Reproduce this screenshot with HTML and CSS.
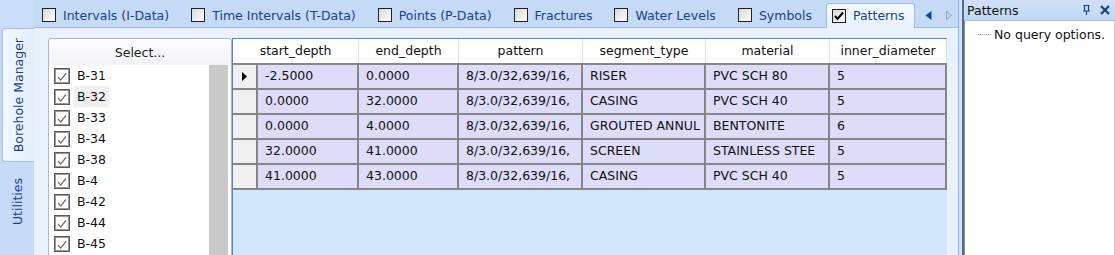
FILE: index.html
```html
<!DOCTYPE html>
<html lang="en">
<head>
  <meta charset="UTF-8" />
  <title>Borehole Manager - Patterns</title>
  <link rel="stylesheet" href="styles.css">
</head>
<body>
  <div class="app">
    <div class="main">
      <!-- Left side tabs -->
      <div class="vtabs">
        <div class="vtabs-corner"></div>
        <div class="vtab active"><span>Borehole Manager</span></div>
        <div class="vtab util"><span>Utilities</span></div>
      </div>

      <div class="workspace">
        <!-- Data type tabs -->
        <div class="tabstrip">
          <div class="tab"><span class="tcb"></span>Intervals (I-Data)</div>
          <div class="tab"><span class="tcb"></span>Time Intervals (T-Data)</div>
          <div class="tab"><span class="tcb"></span>Points (P-Data)</div>
          <div class="tab"><span class="tcb"></span>Fractures</div>
          <div class="tab"><span class="tcb"></span>Water Levels</div>
          <div class="tab"><span class="tcb"></span>Symbols</div>
          <div class="tab active">
            <span class="tcb"><svg width="12" height="12" viewBox="0 0 12 12"><polyline points="2,6 4.5,9 10,2.5" fill="none" stroke="#000" stroke-width="2"/></svg></span>Patterns
          </div>
          <div class="tab-nav">
            <svg width="7" height="9" viewBox="0 0 7 9"><polygon points="6.5,0 6.5,9 0.5,4.5" fill="#15428b"/></svg>
            <svg width="6" height="9" viewBox="0 0 6 9"><polygon points="0.5,0.5 0.5,8.5 5.5,4.5" fill="none" stroke="#8d9db5"/></svg>
          </div>
        </div>

        <div class="content">
          <!-- Borehole selection -->
          <div class="select-panel">
            <div class="select-head">Select...</div>
            <div class="select-body">
              <ul class="select-list" id="borehole-list"></ul>
              <div class="scroll"></div>
            </div>
          </div>

          <!-- Patterns grid -->
          <div class="grid">
            <div class="grid-head">
              <div class="hcell first">start_depth</div>
              <div class="hcell">end_depth</div>
              <div class="hcell">pattern</div>
              <div class="hcell">segment_type</div>
              <div class="hcell">material</div>
              <div class="hcell">inner_diameter</div>
            </div>
            <div class="grid-body" id="grid-body"></div>
          </div>
        </div>
      </div>
    </div>

    <div class="splitter"></div>

    <!-- Query options panel -->
    <div class="side">
      <div class="side-head">
        <span>Patterns</span>
        <span class="side-icons">
          <svg width="7" height="10" viewBox="0 0 7 10"><path d="M0.5 0.5h6M1.5 1v5h4V1M0 6h7M3.5 6v4" fill="none" stroke="#15428b" stroke-width="1.2"/></svg>
          <svg width="10" height="10" viewBox="0 0 10 10"><path d="M1 1L9 9M9 1L1 9" stroke="#15428b" stroke-width="2.2"/></svg>
        </span>
      </div>
      <div class="side-body">
        <div class="side-item"><span class="dots"></span>No query options.</div>
      </div>
    </div>
  </div>

  <script>
    const boreholes = ["B-31", "B-32", "B-33", "B-34", "B-38", "B-4", "B-42", "B-44", "B-45"];

    const rows = [
      ["-2.5000", "0.0000", "8/3.0/32,639/16,", "RISER", "PVC SCH 80", "5"],
      ["0.0000", "32.0000", "8/3.0/32,639/16,", "CASING", "PVC SCH 40", "5"],
      ["0.0000", "4.0000", "8/3.0/32,639/16,", "GROUTED ANNUL", "BENTONITE", "6"],
      ["32.0000", "41.0000", "8/3.0/32,639/16,", "SCREEN", "STAINLESS STEE", "5"],
      ["41.0000", "43.0000", "8/3.0/32,639/16,", "CASING", "PVC SCH 40", "5"]
    ];

    const checkSvg = `<svg width="16" height="16" viewBox="0 0 16 16"><polyline points="3.5,8 6.5,11.5 12.5,4" fill="none" stroke="#6b6b6b" stroke-width="1.4"/></svg>`;

    const list = document.getElementById("borehole-list");
    boreholes.forEach(name => {
      const li = document.createElement("li");
      li.innerHTML = `<span class="lcb">${checkSvg}</span><span class="lbl${name === "B-32" ? " focus" : ""}">${name}</span>`;
      list.appendChild(li);
    });

    const body = document.getElementById("grid-body");
    rows.forEach((r, i) => {
      const row = document.createElement("div");
      row.className = "grow" + (i === rows.length - 1 ? " last" : "");
      const marker = i === 0
        ? `<svg width="5" height="9" viewBox="0 0 5 9"><polygon points="0,0 5,4.5 0,9" fill="#000"/></svg>`
        : "";
      row.innerHTML = `<div class="cell rh">${marker}</div>` + r.map(v => `<div class="cell">${v}</div>`).join("");
      body.appendChild(row);
    });
  </script>
</body>
</html>
```

FILE: styles.css
```css
* { margin: 0; padding: 0; box-sizing: border-box; }
body {
  font-family: "DejaVu Sans", Verdana, sans-serif;
  font-size: 12.5px;
  background: #d4e4f8;
  width: 1115px;
  height: 255px;
  overflow: hidden;
}
.app { display: flex; height: 255px; }
.main { width: 959px; display: flex; }

/* left vertical tabs */
.vtabs { width: 34px; background: #c4daf6; display: flex; flex-direction: column; }
.vtabs-corner { height: 28px; background: #cadef8; }
.vtab { margin-left: 2px; color: #15428b; display: flex; justify-content: center; }
.vtab span { writing-mode: vertical-rl; transform: rotate(180deg); line-height: 30px; }
.vtab.active {
  height: 134px;
  align-items: center;
  background: linear-gradient(to right, #f3f8fe, #e3eefb);
  border: 1px solid #a2c0e8;
  border-right: none;
  border-radius: 3px 0 0 3px;
}
.vtab.util { flex: 1; align-items: flex-start; padding-top: 16px; }

.workspace { flex: 1; display: flex; flex-direction: column; border-right: 1px solid #8fb3e3; }

/* top tab strip */
.tabstrip {
  height: 28px;
  background: #c4daf6;
  border-bottom: 1px solid #9dbde8;
  display: flex;
  align-items: flex-end;
}
.tab {
  height: 24px;
  display: flex;
  align-items: center;
  gap: 7px;
  padding: 0 10px 0 8px;
  margin-right: 4px;
  color: #15428b;
  white-space: nowrap;
}
.tab.active {
  height: 25px;
  margin-bottom: -1px;
  padding: 0 10px 1px 5px;
  background: linear-gradient(#f4f9fe, #e8f1fc);
  border: 1px solid #9dbde8;
  border-bottom: none;
  border-radius: 3px 3px 0 0;
}
.tcb {
  width: 14px;
  height: 14px;
  border: 1px solid #222;
  background: linear-gradient(135deg, #d8d8d8, #fff);
  display: flex;
  align-items: center;
  justify-content: center;
}
.tab-nav {
  margin-left: auto;
  height: 24px;
  display: flex;
  align-items: center;
  gap: 14px;
  padding-right: 6px;
}

/* content area */
.content { flex: 1; background: #e9f1fc; display: flex; padding: 10px 0 0 14px; }

.select-panel {
  width: 184px;
  border: 1px solid #a9b7c9;
  border-bottom: none;
  border-radius: 4px 4px 0 0;
  background: #fff;
  display: flex;
  flex-direction: column;
}
.select-head {
  height: 26px;
  line-height: 27px;
  text-align: center;
  color: #222;
  background: linear-gradient(#fdfdfe, #f0f3f8);
  border-radius: 4px 4px 0 0;
}
.select-body { flex: 1; display: flex; }
.select-list { flex: 1; list-style: none; padding-left: 5px; }
.select-list li { height: 21px; display: flex; align-items: center; gap: 4px; color: #111; }
.lcb {
  width: 16px;
  height: 16px;
  border: 1px solid #5a5a5a;
  box-shadow: inset 0 0 0 1px #9a9a9a;
  background: #fff;
  display: flex;
}
.lbl { height: 21px; line-height: 21px; padding: 0 3px; }
.lbl.focus { background: #efefef; }
.scroll { width: 19px; background: #cacaca; margin-right: 3px; }

/* patterns grid */
.grid {
  width: 715px;
  border-left: 1px solid #4f86cf;
  border-top: 1px solid #4f86cf;
  background: #d4e8fd;
}
.grid-head, .grow {
  display: grid;
  grid-template-columns: 25px 101px 100px 124px 123px 124px 117px;
}
.grid-head { grid-template-columns: 126px 100px 124px 123px 124px 117px; height: 24px; background: #fff; }
.hcell {
  line-height: 24px;
  text-align: center;
  color: #111;
  border-right: 1px solid #e2e2e2;
}
.grow .cell {
  height: 25px;
  line-height: 22px;
  padding-left: 7px;
  background: #dddcf9;
  border-top: 2px solid #868686;
  border-right: 2px solid #868686;
  color: #111;
  white-space: nowrap;
  overflow: hidden;
}
.grow.last .cell { height: 27px; border-bottom: 2px solid #868686; }
.grow .cell.rh {
  background: #f0f0f0;
  padding-left: 9px;
  display: flex;
  align-items: center;
}

/* splitter + right panel */
.splitter { width: 5px; background: #d3e3f7; border-right: 2px solid #506c92; }
.side { flex: 1; display: flex; flex-direction: column; }
.side-head {
  height: 21px;
  background: linear-gradient(#d0e2f8, #c0d7f4);
  border-bottom: 1px solid #a5c1e6;
  display: flex;
  align-items: center;
  justify-content: space-between;
  padding: 0 5px 0 3px;
  color: #111;
}
.side-icons { display: flex; align-items: center; gap: 10px; }
.side-body {
  flex: 1;
  background: #fff;
  border-left: 1px solid #8c8c8c;
  border-right: 1px solid #c4c4c4;
  padding-top: 6px;
}
.side-item { display: flex; align-items: center; gap: 3px; color: #111; }
.dots { width: 13px; margin-left: 13px; border-top: 1px dotted #8f8f8f; }
```
